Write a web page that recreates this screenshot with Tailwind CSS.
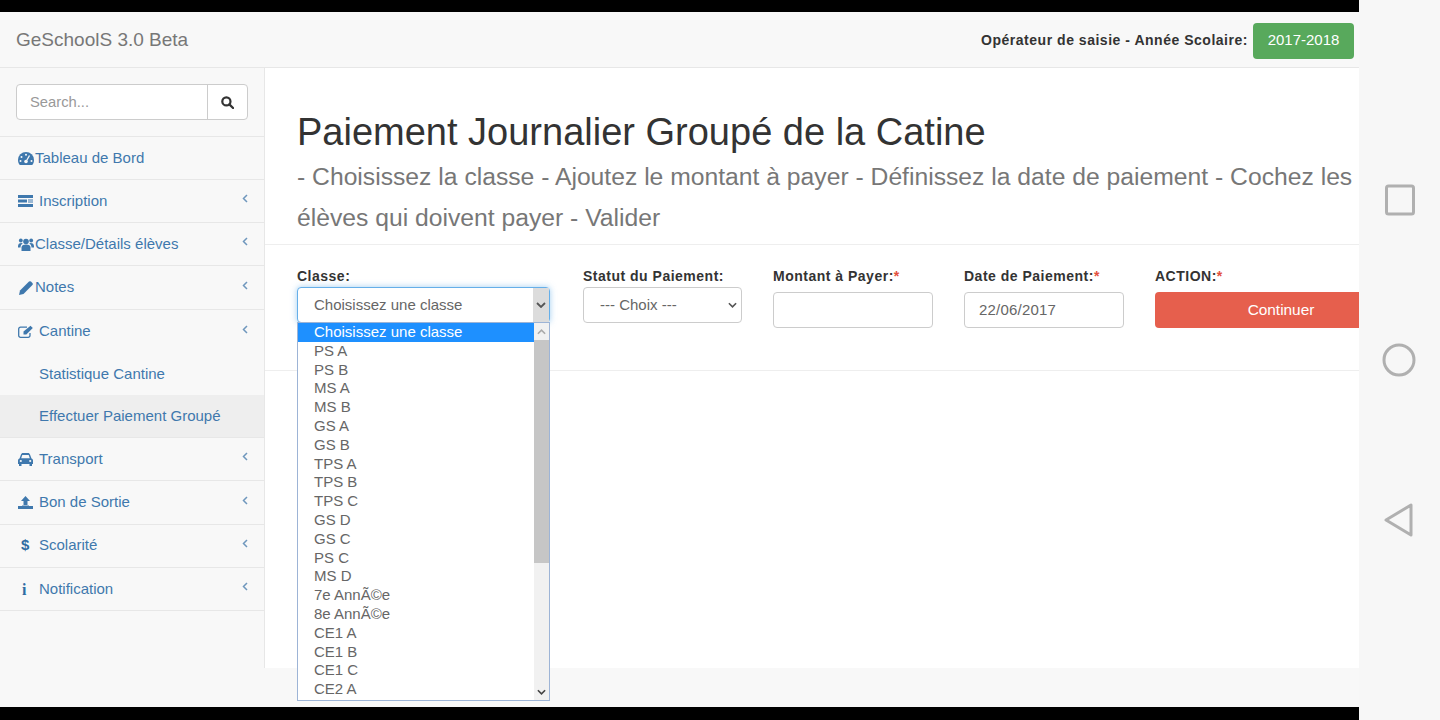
<!DOCTYPE html>
<html lang="fr">
<head>
    <meta charset="UTF-8">
    <meta name="viewport" content="width=device-width, initial-scale=1.0">
    <title>GeSchoolS 3.0 Beta</title>
    <script src="https://cdn.jsdelivr.net/npm/@tailwindcss/browser@4"></script>
</head>
<body class="bg-black overflow-hidden font-['Liberation_Sans',Arial,sans-serif]">
<div class="flex h-[720px] w-[1440px]">
    <!-- screen -->
    <div class="w-[1359px] flex flex-col bg-black">
        <div class="h-3 shrink-0 bg-black"></div>
        <div class="h-[695px] flex flex-col bg-[#f8f8f8] relative overflow-hidden">
            <!-- navbar -->
            <header class="h-[56px] shrink-0 flex items-center justify-between pl-4 pr-[5px] pt-[2px] border-b border-[#e7e7e7]">
                <span class="text-[19px] text-[#777]">GeSchoolS 3.0 Beta</span>
                <div class="flex items-center gap-[5px]">
                    <span class="text-[14px] font-bold text-[#333] tracking-[0.52px]">Opérateur de saisie - Année Scolaire:</span>
                    <span class="w-[101px] h-9 rounded bg-[#58a95c] text-white text-[15px] flex items-center justify-center">2017-2018</span>
                </div>
            </header>
            <div class="flex h-[600px] shrink-0">
                <!-- sidebar -->
                <aside class="w-[265px] shrink-0 border-r border-[#e7e7e7] text-[15px] text-[#3f78ad]">
                    <div class="h-[69px] px-4 pt-4 border-b border-[#e7e7e7]">
                        <div class="flex h-9 w-[232px] bg-white border border-[#ccc] rounded">
                            <span class="flex-1 flex items-center pl-[13px] text-[14.750px] text-[#999]">Search...</span>
                            <span class="w-10 border-l border-[#ccc] flex items-center justify-center">
                                <svg class="w-[13px] h-[13px]" viewBox="0 0 14 14" fill="none" stroke="#333" stroke-width="2.400"><circle cx="5.800" cy="5.800" r="4.400"/><path d="M9 9l4 4" stroke-linecap="round"/></svg>
                            </span>
                        </div>
                    </div>
                    <a class="h-[43px] flex items-center pl-[18px] border-b border-[#e7e7e7]">
                        <svg class="w-[16px] h-[13px] mr-[1px]" viewBox="0 0 16 13" fill="#3f78ad"><path d="M8 0a8 8 0 0 0-8 8c0 2 .6 3.600 1.800 5h12.400c1.200-1.400 1.800-3 1.800-5a8 8 0 0 0-8-8z"/><circle cx="8" cy="2.800" r="1" fill="#f8f8f8"/><circle cx="3.500" cy="5" r="1" fill="#f8f8f8"/><circle cx="2.500" cy="9" r="1" fill="#f8f8f8"/><circle cx="13.500" cy="9" r="1" fill="#f8f8f8"/><path d="M11.500 3.500 8.800 8.300" stroke="#f8f8f8" stroke-width="1.300"/><circle cx="8" cy="9.500" r="1.800" fill="#f8f8f8"/></svg>
                        <span>Tableau de Bord</span>
                    </a>
                    <a class="h-[43px] flex items-center pl-[18px] pr-[15px] border-b border-[#e7e7e7]">
                        <svg class="w-[15px] h-[12px] mr-[6px]" viewBox="0 0 15 12" fill="#3f78ad"><path d="M0 0h15v3H0zM0 4.500h9v3H0zM10 4.500h5v1h-5zM10 6.500h5v1h-5zM0 9h15v3H0z"/></svg>
                        <span class="flex-1">Inscription</span>
                        <svg class="w-[6px] h-[9px] -mt-[5px] mr-[1px]" viewBox="0 0 6 9" fill="none" stroke="#6f97bd" stroke-width="1.500"><path d="M5 1 1.500 4.500 5 8"/></svg>
                    </a>
                    <a class="h-[43px] flex items-center pl-[18px] pr-[15px] border-b border-[#e7e7e7]">
                        <svg class="w-[16px] h-[13px] mr-[1px]" viewBox="0 0 16 13" fill="#3f78ad"><circle cx="8" cy="3.500" r="2.800"/><circle cx="2.800" cy="2.500" r="1.900"/><circle cx="13.200" cy="2.500" r="1.900"/><path d="M3.500 13V9.500C3.500 7.500 5 6.500 8 6.500s4.500 1 4.500 3V13z"/><path d="M0 8.500C0 6 1.200 5 3.500 5c.5 0 1 .4 1.200.8C3.300 6.500 2.500 7.500 2.500 9.500H0zM16 8.500C16 6 14.800 5 12.500 5c-.5 0-1 .4-1.200.8 1.400.7 2.200 1.700 2.200 3.700H16z"/></svg>
                        <span class="flex-1">Classe/Détails élèves</span>
                        <svg class="w-[6px] h-[9px] -mt-[5px] mr-[1px]" viewBox="0 0 6 9" fill="none" stroke="#6f97bd" stroke-width="1.500"><path d="M5 1 1.500 4.500 5 8"/></svg>
                    </a>
                    <a class="h-[44px] flex items-center pl-[19px] pr-[15px] border-b border-[#e7e7e7]">
                        <svg class="w-[14px] h-[14px] mr-[2px]" viewBox="0 0 14 14" fill="#3f78ad"><path d="M0 14l1-4.500L10 .6a1.500 1.500 0 0 1 2 0l1.400 1.400a1.500 1.500 0 0 1 0 2L4.500 13z"/></svg>
                        <span class="flex-1">Notes</span>
                        <svg class="w-[6px] h-[9px] -mt-[5px] mr-[1px]" viewBox="0 0 6 9" fill="none" stroke="#6f97bd" stroke-width="1.500"><path d="M5 1 1.500 4.500 5 8"/></svg>
                    </a>
                    <a class="h-[43px] flex items-center pl-[18px] pr-[15px]">
                        <svg class="w-[16px] h-[13px] mr-[5px]" viewBox="0 0 16 13" fill="none" stroke="#3f78ad" stroke-width="1.300"><path d="M12 8v2.500a1.800 1.800 0 0 1-1.800 1.800H2.500A1.800 1.800 0 0 1 .7 10.500V4a1.800 1.800 0 0 1 1.800-1.800H9"/><path d="M5.500 6.500 12.500.8l2.300 2.200-6.500 6.500H5.500z" fill="#3f78ad" stroke="none"/></svg>
                        <span class="flex-1">Cantine</span>
                        <svg class="w-[6px] h-[9px] -mt-[5px] mr-[1px]" viewBox="0 0 6 9" fill="none" stroke="#6f97bd" stroke-width="1.500"><path d="M5 1 1.500 4.500 5 8"/></svg>
                    </a>
                    <a class="h-[42px] flex items-center pl-[39px]">Statistique Cantine</a>
                    <a class="h-[43px] flex items-center pl-[39px] bg-[#eeeeee] border-b border-[#e7e7e7]">Effectuer Paiement Groupé</a>
                    <a class="h-[43px] flex items-center pl-[17px] pr-[15px] pt-[1px] border-b border-[#e7e7e7]">
                        <svg class="w-[17px] h-[13px] mr-[5px]" viewBox="0 0 17 13" fill="#3f78ad"><path d="M1 11V7.500C1 6.400 1.700 5.700 2.500 5.500L4 1.500C4.300.6 5 0 6 0h5c1 0 1.700.6 2 1.500l1.500 4c.8.2 1.500.9 1.500 2V11h-1v2h-2.500v-2h-8v2H2v-2zM5.300 2 4.200 5.300h8.600L11.700 2z"/><circle cx="3.800" cy="8" r="1.100" fill="#f8f8f8"/><circle cx="13.200" cy="8" r="1.100" fill="#f8f8f8"/></svg>
                        <span class="flex-1">Transport</span>
                        <svg class="w-[6px] h-[9px] -mt-[6px] mr-[1px]" viewBox="0 0 6 9" fill="none" stroke="#6f97bd" stroke-width="1.500"><path d="M5 1 1.500 4.500 5 8"/></svg>
                    </a>
                    <a class="h-[44px] flex items-center pl-[18px] pr-[15px] border-b border-[#e7e7e7]">
                        <svg class="w-[15px] h-[13px] mr-[6px]" viewBox="0 0 15 13" fill="#3f78ad"><path d="M7.500 0 12 5H9.500v4h-4V5H3zM0 10h4v-.5h7v.5h4v3H0z"/></svg>
                        <span class="flex-1">Bon de Sortie</span>
                        <svg class="w-[6px] h-[9px] -mt-[5px] mr-[1px]" viewBox="0 0 6 9" fill="none" stroke="#6f97bd" stroke-width="1.500"><path d="M5 1 1.500 4.500 5 8"/></svg>
                    </a>
                    <a class="h-[43px] flex items-center pl-[21px] pr-[15px] pb-[2px] border-b border-[#e7e7e7]">
                        <span class="w-[18px] font-bold text-[15px] text-[#2f6ca3]">$</span>
                        <span class="flex-1">Scolarité</span>
                        <svg class="w-[6px] h-[9px] -mt-[3px] mr-[1px]" viewBox="0 0 6 9" fill="none" stroke="#6f97bd" stroke-width="1.500"><path d="M5 1 1.500 4.500 5 8"/></svg>
                    </a>
                    <a class="h-[43px] flex items-center pl-[22px] pr-[15px] pt-[1px] border-b border-[#e7e7e7]">
                        <span class="w-[17px] font-bold text-[16px] font-['Liberation_Serif',serif] text-[#2f6ca3]">i</span>
                        <span class="flex-1">Notification</span>
                        <svg class="w-[6px] h-[9px] -mt-[6px] mr-[1px]" viewBox="0 0 6 9" fill="none" stroke="#6f97bd" stroke-width="1.500"><path d="M5 1 1.500 4.500 5 8"/></svg>
                    </a>
                </aside>
                <!-- main -->
                <main class="flex-1 bg-white">
                    <div class="pl-[32px] pt-[40px] border-b border-[#eee] h-[177px]">
                        <h1 class="text-[38px] leading-[48px] text-[#333]">Paiement Journalier Groupé de la Catine</h1>
                        <p class="text-[24.700px] leading-[41px] text-[#777] whitespace-nowrap">- Choisissez la classe - Ajoutez le montant à payer - Définissez la date de paiement - Cochez les<br>élèves qui doivent payer - Valider</p>
                    </div>
                    <div class="relative h-[126px] pl-[32px] pt-[22px] border-b border-[#eee] flex">
                        <div class="w-[286px] shrink-0">
                            <label class="block h-[19px] text-[14px] leading-[19px] font-bold text-[#333] tracking-[0.5px]">Classe:</label>
                            <div class="mt-[1px] w-[253px] h-[36px] flex items-center rounded-[4px] border border-[#66afe9] shadow-[0_0_6px_rgba(102,175,233,0.6)] bg-white">
                                <span class="flex-1 pl-[16px] text-[15px] text-[#666]">Choisissez une classe</span>
                                <span class="w-[16px] h-full bg-[#dcdcdc] flex items-center justify-center">
                                    <svg class="w-[10px] h-[6px]" viewBox="0 0 10 6" fill="none" stroke="#555" stroke-width="1.800"><path d="M1 1l4 4 4-4"/></svg>
                                </span>
                            </div>
                        </div>
                        <div class="w-[190px] shrink-0">
                            <label class="block h-[19px] text-[14px] leading-[19px] font-bold text-[#333] tracking-[0.5px]">Statut du Paiement:</label>
                            <div class="mt-[1px] w-[159px] h-[36px] flex items-center rounded-[4px] border border-[#ccc] bg-white">
                                <span class="flex-1 pl-[16px] text-[15px] text-[#666]">--- Choix ---</span>
                                <svg class="w-[9px] h-[6px] mr-[4px]" viewBox="0 0 10 6" fill="none" stroke="#555" stroke-width="1.800"><path d="M1 1l4 4 4-4"/></svg>
                            </div>
                        </div>
                        <div class="w-[191px] shrink-0">
                            <label class="block h-[19px] text-[14px] leading-[19px] font-bold text-[#333] tracking-[0.5px]">Montant à Payer:<span class="text-[#e3503e]">*</span></label>
                            <div class="mt-[6px] w-[160px] h-[36px] rounded-[4px] border border-[#ccc] bg-white"></div>
                        </div>
                        <div class="w-[191px] shrink-0">
                            <label class="block h-[19px] text-[14px] leading-[19px] font-bold text-[#333] tracking-[0.5px]">Date de Paiement:<span class="text-[#e3503e]">*</span></label>
                            <div class="mt-[6px] w-[160px] h-[36px] flex items-center pl-[14px] rounded-[4px] border border-[#ccc] bg-white text-[15px] text-[#666] tracking-[0.2px]">22/06/2017</div>
                        </div>
                        <div class="flex-1">
                            <label class="block h-[19px] text-[14px] leading-[19px] font-bold text-[#333] tracking-[0.5px]">ACTION:<span class="text-[#e3503e]">*</span></label>
                            <div class="mt-[6px] w-[252px] h-[36px] flex items-center justify-center rounded-[4px] bg-[#e65f4d] text-white text-[15.400px]">Continuer</div>
                        </div>
                    </div>
                </main>
            </div>
            <!-- opened select list -->
            <div class="absolute left-[297px] top-[310px] w-[253px] h-[379px] flex border border-[#9db4d6] bg-white text-[15px] leading-[18.800px] text-[#666]">
                <ul class="flex-1">
                    <li class="pl-[16px] bg-[#1e90ff] text-white">Choisissez une classe</li>
                    <li class="pl-[16px]">PS A</li>
                    <li class="pl-[16px]">PS B</li>
                    <li class="pl-[16px]">MS A</li>
                    <li class="pl-[16px]">MS B</li>
                    <li class="pl-[16px]">GS A</li>
                    <li class="pl-[16px]">GS B</li>
                    <li class="pl-[16px]">TPS A</li>
                    <li class="pl-[16px]">TPS B</li>
                    <li class="pl-[16px]">TPS C</li>
                    <li class="pl-[16px]">GS D</li>
                    <li class="pl-[16px]">GS C</li>
                    <li class="pl-[16px]">PS C</li>
                    <li class="pl-[16px]">MS D</li>
                    <li class="pl-[16px]">7e AnnÃ©e</li>
                    <li class="pl-[16px]">8e AnnÃ©e</li>
                    <li class="pl-[16px]">CE1 A</li>
                    <li class="pl-[16px]">CE1 B</li>
                    <li class="pl-[16px]">CE1 C</li>
                    <li class="pl-[16px]">CE2 A</li>
                </ul>
                <div class="w-[15px] flex flex-col bg-[#f1f1f1]">
                    <span class="h-[17px] flex items-center justify-center">
                        <svg class="w-[9px] h-[6px]" viewBox="0 0 10 6" fill="none" stroke="#aaa" stroke-width="1.800"><path d="M1 5l4-4 4 4"/></svg>
                    </span>
                    <span class="h-[223px] bg-[#c6c6c6]"></span>
                    <span class="flex-1 flex items-end justify-center pb-[5px]">
                        <svg class="w-[9px] h-[6px]" viewBox="0 0 10 6" fill="none" stroke="#444" stroke-width="1.800"><path d="M1 1l4 4 4-4"/></svg>
                    </span>
                </div>
            </div>
        </div>
        <div class="flex-1 bg-black"></div>
    </div>
    <!-- android nav bar -->
    <div class="w-[81px] bg-[#f7f7f7] flex flex-col items-center">
        <svg class="mt-[184px] w-[30px] h-[32px]" viewBox="0 0 30 32" fill="none" stroke="#b0b0b0" stroke-width="3"><rect x="1.500" y="2" width="27" height="28" rx="2"/></svg>
        <svg class="mt-[127px] w-[34px] h-[34px] -ml-[2px]" viewBox="0 0 34 34" fill="none" stroke="#b0b0b0" stroke-width="3"><circle cx="17" cy="17" r="15"/></svg>
        <svg class="mt-[126px] w-[30px] h-[34px] -ml-[1px]" viewBox="0 0 30 34" fill="none" stroke="#b0b0b0" stroke-width="3" stroke-linejoin="round"><path d="M27 2v30L2 17z"/></svg>
    </div>
</div>
</body>
</html>
